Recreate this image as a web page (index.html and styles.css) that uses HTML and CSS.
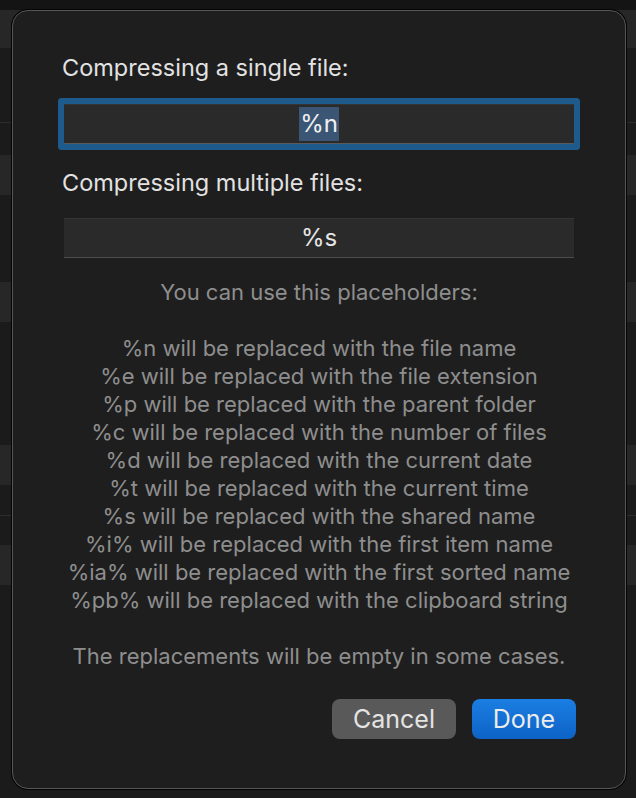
FILE: index.html
```html
<!DOCTYPE html>
<html lang="en">
<head>
    <meta charset="UTF-8">
    <meta name="viewport" content="width=device-width, initial-scale=1.0">
    <title>Archive name</title>
    <link rel="stylesheet" href="styles.css">
</head>
<body>
    <!-- окно за листом -->
    <div class="backdrop">
        <div class="row gap-top"></div>
        <div class="row strip h38"></div>
        <div class="row h74"></div>
        <div class="row line"></div>
        <div class="row h32"></div>
        <div class="row strip h40"></div>
        <div class="row h87"></div>
        <div class="row strip h40"></div>
        <div class="row h123"></div>
        <div class="row strip h40"></div>
        <div class="row h30"></div>
        <div class="row line"></div>
        <div class="row h29"></div>
        <div class="row strip h40"></div>
        <div class="row rest"></div>
    </div>

    <!-- лист с настройками -->
    <div class="sheet">
        <h2 class="label">Compressing a single file:</h2>
        <div class="field focused">
            <span class="value"><span class="selected">%n</span></span>
        </div>

        <h2 class="label second">Compressing multiple files:</h2>
        <div class="field">
            <span class="value">%s</span>
        </div>

        <div class="info">
            <p>You can use this placeholders:</p>
            <p class="blank">&nbsp;</p>
            <p>%n will be replaced with the file name</p>
            <p>%e will be replaced with the file extension</p>
            <p>%p will be replaced with the parent folder</p>
            <p>%c will be replaced with the number of files</p>
            <p>%d will be replaced with the current date</p>
            <p>%t will be replaced with the current time</p>
            <p>%s will be replaced with the shared name</p>
            <p>%i% will be replaced with the first item name</p>
            <p>%ia% will be replaced with the first sorted name</p>
            <p>%pb% will be replaced with the clipboard string</p>
            <p class="blank">&nbsp;</p>
            <p>The replacements will be empty in some cases.</p>
        </div>

        <div class="actions">
            <button class="btn">Cancel</button>
            <button class="btn primary">Done</button>
        </div>
    </div>
</body>
</html>
```

FILE: styles.css
```css
body {
    margin: 0;
    width: 636px;
    height: 798px;
    overflow: hidden;
    background: #1b1b1b;
    font-family: Inter, "Noto Sans", sans-serif;
    position: relative;
}

/* фон: полосы окна позади */
.backdrop {
    display: flex;
    flex-direction: column;
}

.row {
    background: #1b1b1b;
}

.gap-top { height: 10px; background: #141414; }
.strip { background: #272727; }
.line { height: 1px; background: #2c2c2c; }
.h38 { height: 38px; }
.h74 { height: 74px; }
.h32 { height: 32px; }
.h40 { height: 40px; }
.h87 { height: 87px; }
.h123 { height: 123px; }
.h30 { height: 30px; }
.h29 { height: 29px; }
.rest { height: 220px; }

/* лист поверх окна */
.sheet {
    position: absolute;
    left: 12px;
    top: 10px;
    width: 614px;
    height: 779px;
    box-sizing: border-box;
    padding: 41px 51px 0;
    background: #1e1e1e;
    border: 1px solid #565656;
    border-radius: 16px;
    box-shadow: 0 0 0 1px #050505;
    display: flex;
    flex-direction: column;
}

.label {
    margin: 0 0 0 -2px;
    font-size: 23.5px;
    font-weight: 400;
    line-height: 32px;
    color: #e2e2e2;
}

.label.second {
    margin-top: 23px;
}

.field {
    height: 40px;
    margin-top: 19px;
    background: #2a2a2a;
    border-top: 1px solid #343434;
    border-bottom: 1px solid #4c4c4c;
    box-sizing: border-box;
    display: flex;
    align-items: center;
    justify-content: center;
}

.field.focused {
    border-bottom-color: #5a5a5a;
    box-shadow: 0 0 0 6px #1e5b8c;
    border-radius: 1px;
    margin-top: 20px;
}

.second + .field {
    margin-top: 19px;
}

.value {
    font-size: 24px;
    color: #e6e6e6;
    line-height: 34px;
}

.selected {
    background: #3b5675;
    display: inline-block;
    padding: 0 1px;
    color: #f0f0f0;
}

.info {
    margin-top: 20px;
    text-align: center;
    color: #8e8e8e;
    font-size: 22px;
    line-height: 28px;
}

.info p {
    margin: 0;
}

.actions {
    display: flex;
    justify-content: flex-end;
    gap: 16px;
    margin-top: 29px;
    margin-right: -2px;
}

.btn {
    height: 40px;
    width: 124px;
    padding: 0;
    border: none;
    border-radius: 8px;
    background: #595959;
    color: #e4e4e4;
    font-family: inherit;
    font-size: 25px;
    cursor: pointer;
}

.btn.primary {
    width: 104px;
    background: linear-gradient(#1b7ee2, #0d63c6);
    color: #ececec;
}
```
